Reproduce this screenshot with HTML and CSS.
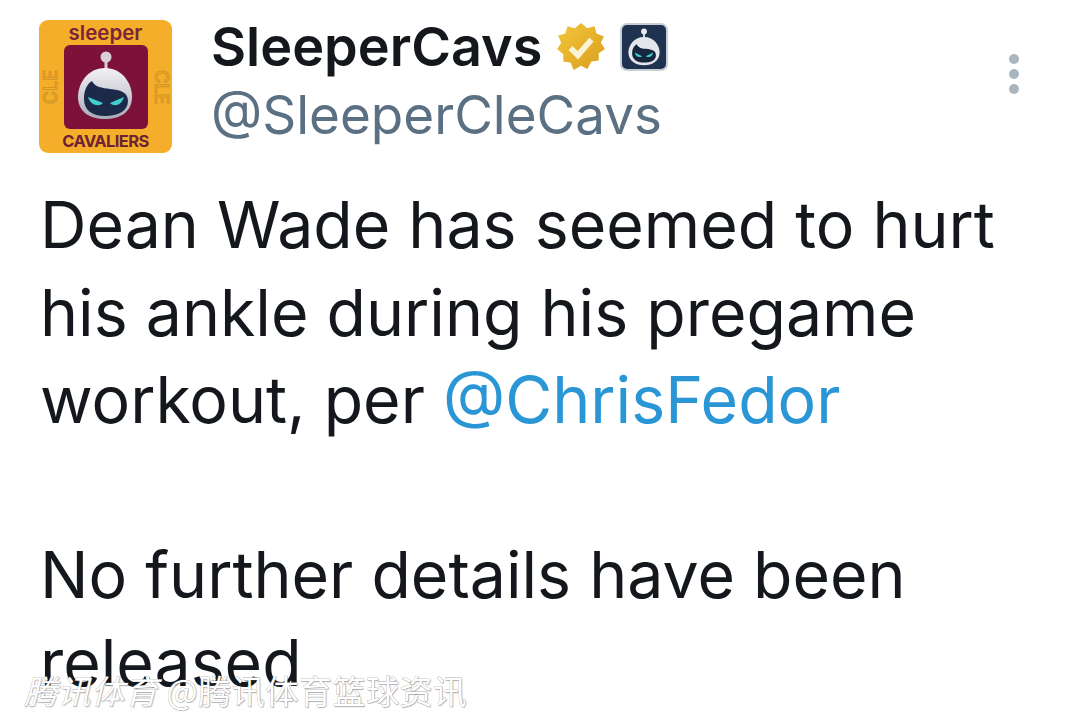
FILE: index.html
```html
<!DOCTYPE html>
<html lang="zh">
<head>
  <meta charset="UTF-8">
  <title>SleeperCavs</title>
  <link rel="stylesheet" href="styles.css">
</head>
<body>
  <div class="tweet">
    <header class="head">
      <div class="avatar">
        <span class="brand">sleeper</span>
        <div class="avatar-mid">
          <span class="cle cle-left">CLE</span>
          <div class="robot-box">
            <svg viewBox="0 0 84 84" width="84" height="84">
              <defs>
                <linearGradient id="dome" x1="0" y1="0" x2="0" y2="1">
                  <stop offset="0" stop-color="#f4f2f6"/>
                  <stop offset="1" stop-color="#a9abb8"/>
                </linearGradient>
              </defs>
              <circle cx="42" cy="12" r="5.5" fill="#d9cfd8"/>
              <rect x="40.5" y="16" width="3" height="9" fill="#d9cfd8"/>
              <path d="M41 23C58 23 68 38 68 52C68 67 56 74 41 74C26 74 14 67 14 52C14 38 24 23 41 23Z" fill="url(#dome)"/>
              <path d="M20 54C20 45 23 39 28 36C31 42 38 43 46 44C56 45 64 47 64 56C64 66 54 71 41 71C28 71 20 65 20 54Z" fill="#1c2a4a"/>
              <path d="M24 52L39 58C35 62 27 61 24 52Z" fill="#3fd0cf"/>
              <path d="M60 52L46 58C50 62 57 61 60 52Z" fill="#3fd0cf"/>
            </svg>
          </div>
          <span class="cle cle-right">CLE</span>
        </div>
        <span class="team">CAVALIERS</span>
      </div>
      <div class="names">
        <div class="name-row">
          <span class="name">SleeperCavs</span>
          <svg class="verified" viewBox="0 0 48 48" width="50" height="50">
            <defs>
              <linearGradient id="gold" x1="0" y1="0" x2="1" y2="1">
                <stop offset="0" stop-color="#f4c63d"/>
                <stop offset="1" stop-color="#d99e1c"/>
              </linearGradient>
            </defs>
            <path d="M24 1L30 6L37 4L39 11L46 14L43 20L47 26L41 30L41 37L34 38L30 45L24 42L17 46L14 39L7 38L7 31L1 26L5 20L2 13L9 11L11 4L18 6Z" fill="url(#gold)"/>
            <path d="M14 25L21 32L34 17" fill="none" stroke="#fbf3d6" stroke-width="5.5"/>
          </svg>
          <div class="app-badge">
            <svg viewBox="0 0 48 48" width="44" height="44">
              <circle cx="24" cy="7" r="3.2" fill="#e8e8ee"/>
              <rect x="23" y="9" width="2" height="5" fill="#e8e8ee"/>
              <path d="M24 13C35 13 41 22 41 30C41 39 33 44 24 44C15 44 7 39 7 30C7 22 13 13 24 13Z" fill="#e4e6ec"/>
              <path d="M11 31C11 26 13 23 16 21C18 25 22 26 26 26C33 27 37 28 37 33C37 39 31 41 24 41C16 41 11 37 11 31Z" fill="#16263f"/>
              <path d="M14 30L22 34C19 36 15 35 14 30Z" fill="#3fd0cf"/>
              <path d="M34 30L26 34C29 36 33 35 34 30Z" fill="#3fd0cf"/>
            </svg>
          </div>
        </div>
        <div class="handle">@SleeperCleCavs</div>
      </div>
      <div class="more"><i></i><i></i><i></i></div>
    </header>
    <p class="body-text">Dean Wade has seemed to hurt<br>his ankle during his pregame<br>workout, per <span class="mention">@ChrisFedor</span><br><br>No further details have been<br>released</p>
  </div>
  <div class="watermark"><em>腾讯体育</em> @腾讯体育篮球资讯</div>
</body>
</html>
```

FILE: styles.css
```css
* { margin: 0; padding: 0; box-sizing: border-box; }
html, body { height: 726px; overflow: hidden; }
body { background: #fff; color: #0f1419; font-family: Inter, "Noto Sans CJK SC", sans-serif; }

.tweet { padding: 20px 61px 0 39px; }
.head { display: flex; align-items: flex-start; }

.avatar {
  width: 133px; height: 133px; background: #f5ae29; border-radius: 9px;
  display: flex; flex-direction: column; align-items: center; flex-shrink: 0;
}
.brand { font-size: 20.5px; font-weight: 600; line-height: 25px; color: #7c2438; }
.avatar-mid { display: flex; align-items: center; justify-content: center; gap: 4px; }
.robot-box {
  width: 84px; height: 84px; background: #7c1239; border-radius: 6px;
}
.robot-box svg { display: block; }
.cle {
  writing-mode: vertical-rl; font-size: 18px; font-weight: 500; line-height: 18px;
  color: #f5ae29; -webkit-text-stroke: 1px #cf9526;
}
.cle-left { transform: rotate(180deg); }
.team { font-size: 16.5px; font-weight: 700; line-height: 24px; color: #6e2233; letter-spacing: -0.6px; }

.names { margin-left: 39px; flex: 1; }
.name-row { display: flex; align-items: center; height: 53px; }
.name { font-size: 54px; font-weight: 600; line-height: 53px; color: #14181c; }
.verified { margin-left: 14px; }
.app-badge {
  width: 48px; height: 48px; margin-left: 14px; background: #1f3350;
  border: 2px solid #c6ced6; border-radius: 7px; display: flex;
  align-items: center; justify-content: center;
}
.handle { font-size: 53px; line-height: 60px; color: #5b7083; margin-top: 12px; }

.more { display: flex; flex-direction: column; gap: 5px; margin: 34px 0 0; }
.more i { display: block; width: 10px; height: 10px; border-radius: 50%; background: #aab6be; }

.body-text { font-size: 64.4px; line-height: 87.5px; margin: 29px 0 0 1px; white-space: nowrap; color: #14181c; }
.mention { color: #2a96d6; }

.watermark {
  position: absolute; left: 24px; top: 670px; white-space: nowrap;
  font-family: "Noto Sans CJK SC", sans-serif; font-size: 33px; line-height: 40px; letter-spacing: 0.6px;
  color: #fff; -webkit-text-stroke: 0.5px #8a8a8a; paint-order: stroke fill;
  text-shadow: 1px 1px 1px rgba(0,0,0,0.2);
}
.watermark em { font-style: italic; }
```
